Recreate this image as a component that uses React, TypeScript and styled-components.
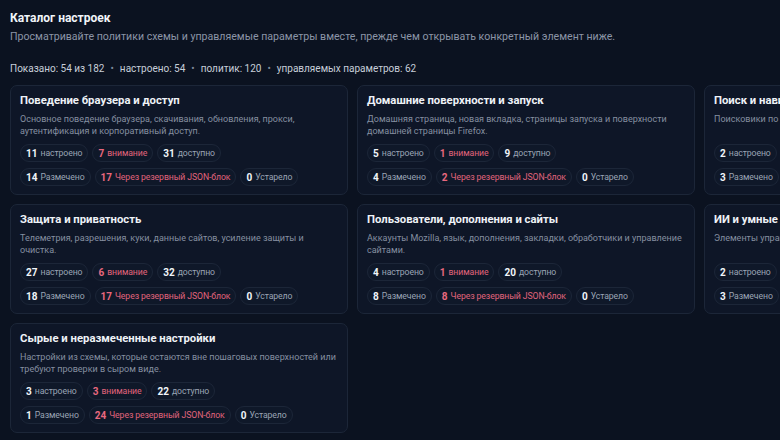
import React from 'react';
import styled, { createGlobalStyle } from 'styled-components';

const GlobalStyle = createGlobalStyle`
    html, body {
        margin: 0;
        padding: 0;
        background: #0b1220;
        overflow: hidden;
    }
    body {
        font-family: Roboto, "Noto Sans", sans-serif;
        color: #e5e7eb;
    }
`;

const Page = styled.div`
    width: 780px;
    height: 440px;
    padding: 10px 10px 0;
    box-sizing: border-box;
    overflow: hidden;
`;

const Header = styled.header`
    display: flex;
    flex-direction: column;
    gap: 2px;
    h1 {
        margin: 0;
        font-size: 12px;
        font-weight: 700;
        color: #f1f5f9;
        line-height: 17px;
    }
    p {
        margin: 0;
        font-size: 10.6px;
        color: #8b95a7;
        line-height: 16px;
    }
`;

const Stats = styled.div`
    margin-top: 17px;
    display: flex;
    align-items: center;
    gap: 6px;
    font-size: 10px;
    color: #c7ced9;
    line-height: 14px;
    .dot {
        color: #7c8799;
    }
`;

const Grid = styled.div`
    margin-top: 9px;
    display: grid;
    grid-template-columns: repeat(3, 338px);
    gap: 9px;
`;

const Card = styled.section`
    background: #0e1627;
    border: 1px solid #1c2638;
    border-radius: 7px;
    padding: 7px 9px 8px;
    box-sizing: border-box;
    display: flex;
    flex-direction: column;
    h3 {
        margin: 0;
        font-size: 11.3px;
        font-weight: 700;
        color: #eef2f7;
        line-height: 16px;
        white-space: nowrap;
    }
    p {
        margin: 4px 0 7px;
        font-size: 9px;
        line-height: 12px;
        color: #858fa0;
        height: 24px;
        flex-shrink: 0;
    }
`;

const PillRow = styled.div`
    display: flex;
    gap: 4px;
    white-space: nowrap;
    & + & {
        margin-top: 6px;
    }
`;

const Pill = styled.span<{ warn?: boolean }>`
    display: inline-flex;
    align-items: center;
    gap: 3px;
    height: 18px;
    padding: 0 5px;
    border-radius: 9px;
    border: 1px solid #1c2638;
    background: #0f1829;
    box-sizing: border-box;
    font-size: 8.7px;
    letter-spacing: -0.1px;
    color: ${p => (p.warn ? '#e0647c' : '#9aa4b4')};
    b {
        font-size: 10px;
        font-weight: 700;
        letter-spacing: 0;
        color: ${p => (p.warn ? '#e8687f' : '#f1f5f9')};
    }
`;

interface Section {
    title: string;
    desc: string;
    configured: number;
    warn: number;
    available: number;
    marked: number;
    fallback: number;
    stale: number;
}

const sections: Section[] = [
    {
        title: 'Поведение браузера и доступ',
        desc: 'Основное поведение браузера, скачивания, обновления, прокси, аутентификация и корпоративный доступ.',
        configured: 11, warn: 7, available: 31, marked: 14, fallback: 17, stale: 0,
    },
    {
        title: 'Домашние поверхности и запуск',
        desc: 'Домашняя страница, новая вкладка, страницы запуска и поверхности домашней страницы Firefox.',
        configured: 5, warn: 1, available: 9, marked: 4, fallback: 2, stale: 0,
    },
    {
        title: 'Поиск и навигация',
        desc: 'Поисковики по умолчанию, подсказки и поведение адресной строки.',
        configured: 2, warn: 0, available: 6, marked: 3, fallback: 1, stale: 0,
    },
    {
        title: 'Защита и приватность',
        desc: 'Телеметрия, разрешения, куки, данные сайтов, усиление защиты и очистка.',
        configured: 27, warn: 6, available: 32, marked: 18, fallback: 17, stale: 0,
    },
    {
        title: 'Пользователи, дополнения и сайты',
        desc: 'Аккаунты Mozilla, язык, дополнения, закладки, обработчики и управление сайтами.',
        configured: 4, warn: 1, available: 20, marked: 8, fallback: 8, stale: 0,
    },
    {
        title: 'ИИ и умные функции',
        desc: 'Элементы управления ИИ-чатом и связанные умные функции браузера.',
        configured: 2, warn: 0, available: 4, marked: 3, fallback: 1, stale: 0,
    },
    {
        title: 'Сырые и неразмеченные настройки',
        desc: 'Настройки из схемы, которые остаются вне пошаговых поверхностей или требуют проверки в сыром виде.',
        configured: 3, warn: 3, available: 22, marked: 1, fallback: 24, stale: 0,
    },
];

const SectionCard: React.FC<{ s: Section }> = ({ s }) => (
    <Card>
        <h3>{s.title}</h3>
        <p>{s.desc}</p>
        <PillRow>
            <Pill><b>{s.configured}</b>настроено</Pill>
            <Pill warn><b>{s.warn}</b>внимание</Pill>
            <Pill><b>{s.available}</b>доступно</Pill>
        </PillRow>
        <PillRow>
            <Pill><b>{s.marked}</b>Размечено</Pill>
            <Pill warn><b>{s.fallback}</b>Через резервный JSON-блок</Pill>
            <Pill><b>{s.stale}</b>Устарело</Pill>
        </PillRow>
    </Card>
);

export default function App() {
    return (
        <Page>
            <GlobalStyle />
            <Header>
                <h1>Каталог настроек</h1>
                <p>Просматривайте политики схемы и управляемые параметры вместе, прежде чем открывать конкретный элемент ниже.</p>
            </Header>
            <Stats>
                <span>Показано: 54 из 182</span>
                <span className="dot">•</span>
                <span>настроено: 54</span>
                <span className="dot">•</span>
                <span>политик: 120</span>
                <span className="dot">•</span>
                <span>управляемых параметров: 62</span>
            </Stats>
            <Grid>
                {sections.map((s, i) => (
                    <SectionCard key={i} s={s} />
                ))}
            </Grid>
        </Page>
    );
}
